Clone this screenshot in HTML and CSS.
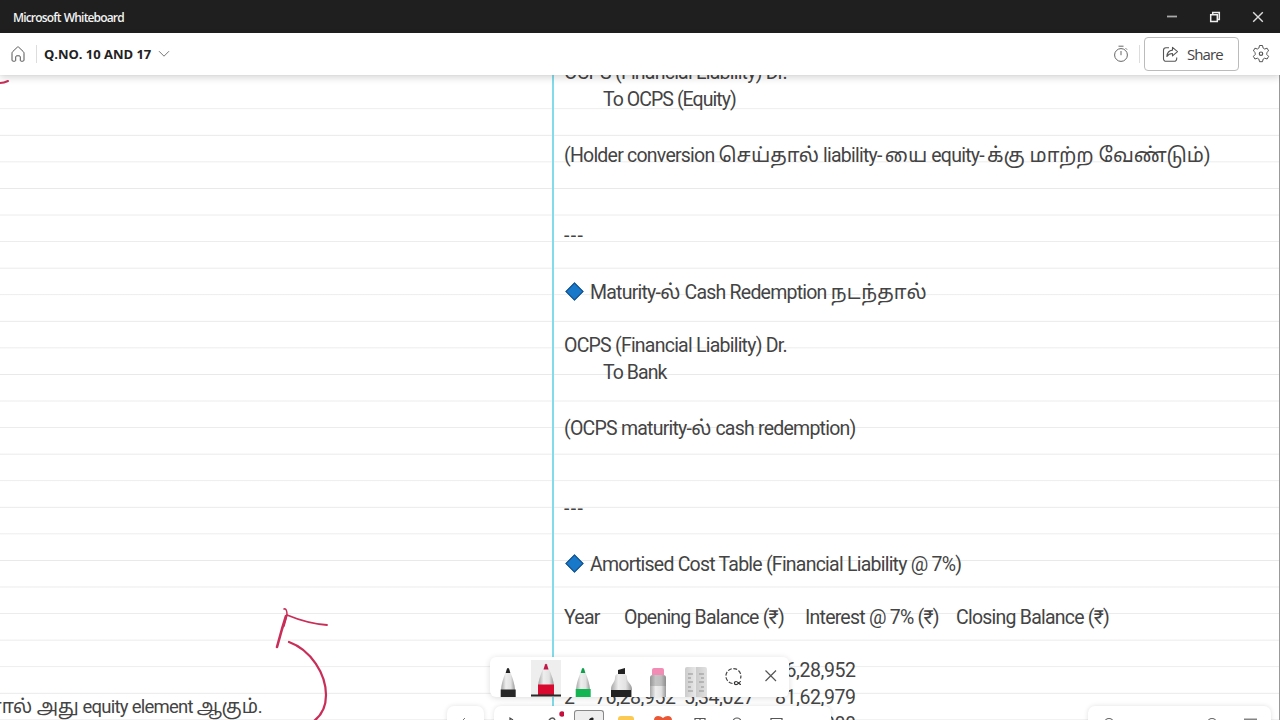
FILE: index.html
```
<!DOCTYPE html>
<html lang="en">
<head>
  <meta charset="UTF-8" />
  <meta name="viewport" content="width=device-width, initial-scale=1.0"/>
  <title>Microsoft Whiteboard</title>
  <link rel="stylesheet" href="styles.css">
</head>
<body>
  <div class="titlebar">
    <span class="app-name">Microsoft Whiteboard</span>
    <div class="window-buttons">
      <svg width="12" height="12" viewBox="0 0 12 12"><path d="M1 5.5h10" stroke="#aaa" stroke-width="1.8"/></svg>
      <svg width="12" height="12" viewBox="0 0 12 12"><path d="M1.7 3.7h6.6v6.8H1.7zM3.7 3.5V1.4h6.6v7.2H8.5" stroke="#eee" stroke-width="1.5"/></svg>
      <svg width="12" height="12" viewBox="0 0 12 12"><path d="M1.2 1.2l9.6 9.6M10.8 1.2L1.2 10.8" stroke="#ddd" stroke-width="1.4"/></svg>
    </div>
  </div>

  <header class="header">
    <svg class="home" width="16" height="18" viewBox="0 0 16 18"><path d="M2 8.2c0-.7.3-1.2.8-1.7l4.4-4.2c.5-.5 1.1-.5 1.6 0l4.4 4.2c.5.5.8 1 .8 1.7v6.9c0 .7-.4 1.1-1.1 1.1h-1.8c-.5 0-.8-.3-.8-.8V12c0-.7-.4-1.2-1.1-1.2H6.800c-.7 0-1.1.5-1.1 1.2v3.4c0 .5-.3.8-.8.8H3.100c-.7 0-1.1-.4-1.1-1.1z" stroke="#555"/></svg>
    <span class="divider"></span>
    <span class="board-name">Q.NO. 10 AND 17</span>
    <svg class="chevron" width="12" height="8" viewBox="0 0 12 8"><path d="M1 1.2l5 5 5-5" stroke="#777"/></svg>

    <div class="header-right">
      <svg width="16" height="18" viewBox="0 0 16 18"><circle cx="8" cy="10" r="6.4" stroke="#666"/><path d="M5.5 1.2h5M8 6v4.2M12.6 3.2l1.4 1.4" stroke="#666"/></svg>
      <span class="divider"></span>
      <button class="share">
        <svg width="17" height="17" viewBox="0 0 17 17"><path d="M7 1.7H4A2.5 2.5 0 0 0 1.5 4.2v8.6A2.5 2.5 0 0 0 4 15.3h8.2a2.5 2.5 0 0 0 2.5-2.5v-1.3" stroke="#555" stroke-width="1.1"/><path d="M10.5 1.3l5 4.3-5 4.3V7.5c-2.6 0-4.3.9-5.6 3 .2-3.6 2-6 5.6-6.400z" stroke="#555" stroke-width="1.1" stroke-linejoin="round"/></svg>
        <span>Share</span>
      </button>
      <svg class="gear" width="18" height="20" viewBox="0 0 18 20"><path d="M7.5 1.5h3l.6 2.6q.8.3 1.5.9l2.5-.8 1.5 2.7-1.9 1.8q.2.8 0 1.7l1.9 1.9-1.5 2.7-2.5-.8q-.7.6-1.5.9l-.6 2.6h-3l-.6-2.600q-.8-.3-1.5-.9l-2.500.8-1.500-2.700 1.900-1.900q-.2-.9 0-1.700L1.400 6.900l1.500-2.700 2.500.8q.7-.6 1.500-.9z" stroke="#555" stroke-linejoin="round"/><circle cx="9" cy="9.700" r="1.700" stroke="#555" stroke-width="1.200"/></svg>
    </div>
  </header>

  <main class="board">
    <span class="margin-line"></span>

    <div class="notes">
      <p>OCPS (Financial Liability) Dr.</p>
      <p class="indent">To OCPS (Equity)</p>
      <p class="gap">(Holder conversion <span class="ta">செய்தால்</span> liability<span class="hyphen">-</span><span class="ta">யை</span> equity<span class="hyphen">-</span><span class="ta">க்கு மாற்ற வேண்டும்</span>)</p>
      <p class="gap-wide dashes">---</p>
      <p class="heading"><i class="diamond"></i>Maturity-<span class="ta">ல்</span> Cash Redemption <span class="ta wide">நடந்தால்</span></p>
      <p class="gap-small">OCPS (Financial Liability) Dr.</p>
      <p class="indent">To Bank</p>
      <p class="gap">(OCPS maturity-<span class="ta">ல்</span> cash redemption)</p>
      <p class="gap-wide dashes">---</p>
      <p class="heading"><i class="diamond"></i>Amortised Cost Table (Financial Liability @ 7%)</p>
      <p class="gap-small columns"><span class="year">Year</span><span class="opening">Opening Balance (₹)</span><span class="interest">Interest @ 7% (₹)</span><span>Closing Balance (₹)</span></p>
      <p class="gap-small row"><span class="no">1</span><span class="open">71,20,516</span><span class="int">4,98,436</span><span>76,28,952</span></p>
      <p class="row"><span class="no">2</span><span class="open">76,28,952</span><span class="int">5,34,027</span><span>81,62,979</span></p>
      <p class="row"><span class="no">3</span><span class="open">81,62,979</span><span class="int">5,71,409</span><span>87,34,388</span></p>
    </div>

    <p class="left-note"><span class="ta">ஆனால் அது</span> equity element <span class="ta">ஆகும்</span>.</p>

    <svg class="ink" width="340" height="645" viewBox="0 75 340 645">
      <path d="M0 83q4 0 8-2" stroke-width="2"/>
      <path d="M284 609q3-1 3 6l-3 11" stroke-width="1.5"/>
      <path d="M286 616l-4 13-5 18" stroke-width="2.6"/>
      <path d="M287 615c12 5 26 9 40 10" stroke-width="1.8"/>
      <path d="M289 642c22 8 37 32 37 53 0 11-4 20-12 26" stroke-width="2.2"/>
    </svg>

    <div class="pens">
      <svg class="tool" width="30" height="37" viewBox="0 0 30 37"><path d="M8 37v-6c0-7 3-15 6-22h2c3 7 6 15 6 22v6z" fill="url(#body)"/><path d="M12.7 13L14 8.5q1-1 2 0l1.3 4.5z" fill="#222"/><path d="M7.7 29.5h15V37h-15z" fill="#272727"/></svg>
      <svg class="tool active" width="30" height="37" viewBox="0 0 30 37"><path d="M7 36v-9C7 20 11 11 14 5h2c3 6 7 15 7 22v9z" fill="url(#body)"/><path d="M12.5 9.5L14 4.5q1-1.5 2 0l1.5 5z" fill="#c21847"/><path d="M7 24.5h16V35H7z" fill="#d8082f"/><path d="M0 35.500h30" stroke="#292929" stroke-width="2"/></svg>
      <svg class="tool" width="30" height="37" viewBox="0 0 30 37"><path d="M8 37v-6c0-7 3-15 6-22h2c3 7 6 15 6 22v6z" fill="url(#body)"/><path d="M12.7 13L14 8.5q1-1 2 0l1.3 4.5z" fill="#0ea04b"/><path d="M7.7 29h15v8h-15z" fill="#12b552"/></svg>
      <svg class="tool" width="30" height="37" viewBox="0 0 30 37"><path d="M5 37v-8c0-5 4-7 4-11q0-4 3-4h6q3 0 3 4c0 4 5 6 5 11v8z" fill="url(#body)"/><path d="M12 14v-4l7-2v6z" fill="#222"/><path d="M5 30h20v7H5z" fill="#222"/></svg>
      <svg class="tool" width="30" height="37" viewBox="0 0 30 37"><path d="M7 37V18q0-3 3-3h10q3 0 3 3v19z" fill="url(#body)"/><path d="M7 26v-8q0-3 3-3h10q3 0 3 3v8z" fill="#777" opacity=".35"/><path d="M9 15v-5q0-2 2-2h8q2 0 2 2v5z" fill="#f38cb5"/></svg>
      <svg class="tool" width="30" height="37" viewBox="0 0 30 37"><path d="M4 37V9q0-2 2-2h18q2 0 2 2v28z" fill="url(#ruler)"/><path d="M7 14h5M7 18h3M7 22h5M7 27h3M7 31h5M23 14h-5M23 18h-3M23 22h-5M23 27h-3M23 31h-5" stroke="#777" stroke-width=".7"/></svg>
      <svg class="tool" width="30" height="37" viewBox="0 0 30 37"><path d="M14.5 23.5a7.5 7.5 0 1 1 8-5" stroke="#444" stroke-width="1.2" stroke-dasharray="4 1.6"/><path d="M23 24.5c-2 0-3-3-5-3a1.6 1.6 0 0 0 0 3.2c2.500 0 3-3.200 5-3.200" stroke="#333" stroke-width="1.2"/></svg>
      <svg class="tool" width="30" height="37" viewBox="0 0 30 37"><path d="M9.5 10.5L20 21M20 10.5L9.500 21" stroke="#555" stroke-width="1.2"/></svg>
    </div>

    <div class="undo-card"><svg width="36" height="14" viewBox="0 0 36 14"><path d="M18 12l-3 3" stroke="#777"/></svg></div>

    <div class="toolbar">
      <svg class="item" width="30" height="14" viewBox="0 0 30 14"><path d="M14 14v-2l3 2" stroke="#444" stroke-width="1.2"/></svg>
      <svg class="item" width="30" height="14" viewBox="0 0 30 14"><path d="M15 14q4-4 6 0" stroke="#555" stroke-width="1.5"/><circle cx="28" cy="8" r="2.700" fill="#c50f3c"/></svg>
      <svg class="item selected" width="30" height="14" viewBox="0 0 30 14"><path d="M14 11l2-3q3-2 4 0l-1 6z" fill="#222"/></svg>
      <svg class="item" width="30" height="14" viewBox="0 0 30 14"><path d="M9 14v-1q0-3 3-3h10q3 0 3 3v1z" fill="#fbca55"/></svg>
      <svg class="item" width="30" height="14" viewBox="0 0 30 14"><path d="M8 14c0-5 6-5 9-2 3-3 9-3 9 2z" fill="#e95836"/></svg>
      <svg class="item" width="30" height="14" viewBox="0 0 30 14"><path d="M11 14v-1.500h10V14M16 12.500V14" stroke="#555" stroke-width="1.2"/></svg>
      <svg class="item" width="30" height="14" viewBox="0 0 30 14"><circle cx="16" cy="16" r="4" stroke="#555" stroke-width="1.2"/></svg>
      <svg class="item" width="30" height="14" viewBox="0 0 30 14"><path d="M12 14v-1.500h11V14" stroke="#555" stroke-width="1.2"/></svg>
    </div>

    <div class="zoom-card">
      <svg width="150" height="14" viewBox="0 0 150 14"><circle cx="21" cy="17" r="4.5" stroke="#666" stroke-width="1.2"/><circle cx="124" cy="17" r="4.5" stroke="#666" stroke-width="1.2"/></svg>
      <svg width="24" height="14" viewBox="0 0 24 14"><path d="M6 13.2h13" stroke="#666" stroke-width="1.2"/></svg>
    </div>
  </main>

  <svg width="0" height="0" class="defs">
    <linearGradient id="body"><stop offset="0" stop-color="#a5a5a5"/><stop offset=".35" stop-color="#eee"/><stop offset=".7" stop-color="#e2e2e2"/><stop offset="1" stop-color="#999"/></linearGradient>
    <linearGradient id="ruler"><stop offset="0" stop-color="#ccc"/><stop offset=".48" stop-color="#e8e8e8"/><stop offset=".52" stop-color="#ccc"/><stop offset="1" stop-color="#e1e1e1"/></linearGradient>
  </svg>
</body>
</html>
```
FILE: styles.css
```
* {
  margin: 0;
  padding: 0;
  box-sizing: border-box;
}

body {
  width: 1280px;
  height: 720px;
  overflow: hidden;
  display: flex;
  flex-direction: column;
  background: #fff;
  font-family: "Open Sans", sans-serif;
}

svg {
  fill: none;
  display: block;
  flex-shrink: 0;
}

.defs {
  position: absolute;
}

.titlebar {
  height: 33px;
  flex-shrink: 0;
  background: #1f1f1f;
  color: #f2f2f2;
  display: flex;
  align-items: center;
  justify-content: space-between;
  padding: 0 16px 0 13px;
}

.app-name {
  font-size: 12px;
  font-weight: 600;
  letter-spacing: -0.84px;
  word-spacing: 1px;
  padding-top: 2px;
}

.window-buttons {
  display: flex;
  gap: 31px;
}

.header {
  height: 42px;
  flex-shrink: 0;
  display: flex;
  align-items: center;
  padding: 0 10px;
  background: #fff;
  position: relative;
  z-index: 2;
  box-shadow: 0 3px 7px rgba(0, 0, 0, 0.15);
}

.divider {
  width: 1px;
  height: 18px;
  background: #ddd;
}

.home + .divider {
  margin-left: 10px;
}

.board-name {
  margin-left: 7px;
  font-size: 13px;
  font-weight: 700;
  color: #222;
  letter-spacing: -0.03px;
}

.chevron {
  margin-left: 7px;
}

.header-right {
  margin-left: auto;
  display: flex;
  align-items: center;
}

.header-right .divider {
  margin: 0 4px 0 10px;
}

.share {
  width: 95px;
  height: 34px;
  border: 1px solid #bbb;
  border-radius: 4px;
  background: #fff;
  display: flex;
  align-items: center;
  gap: 8px;
  padding-left: 17px;
  font: 15px "Open Sans", sans-serif;
  letter-spacing: -0.9px;
  color: #444;
}

.gear {
  margin-left: 13px;
}

.board {
  flex: 1;
  position: relative;
  overflow: hidden;
  border-right: 1px solid #999;
  background: repeating-linear-gradient(#fff 0, #fff 24.8px, #e9e9e9 25.8px, #fff 26.57px);
  background-position: 0 8px;
}

.margin-line {
  position: absolute;
  left: 552px;
  top: 0;
  bottom: 0;
  width: 2px;
  background: #83dcea;
}

.notes {
  padding-left: 564px;
  margin-top: -16px;
  font-family: Roboto, "Noto Sans Tamil", "Noto Sans", sans-serif;
  font-size: 19.5px;
  letter-spacing: -0.77px;
  color: #444;
}

.notes p {
  height: 27px;
  line-height: 27px;
  white-space: pre;
}

.notes .indent {
  padding-left: 39px;
  letter-spacing: -0.95px;
}

.notes .gap {
  margin-top: 29px;
}

.notes .gap-wide {
  margin-top: 53px;
}

.notes .gap-small {
  margin-top: 26px;
}

.notes .dashes {
  letter-spacing: 1.3px;
}

.notes .ta {
  font-size: 20px;
  letter-spacing: -0.05px;
}

.notes .wide {
  letter-spacing: 0.4px;
}

.notes .hyphen {
  letter-spacing: 2.4px;
}

.notes .heading {
  display: flex;
  margin-top: 29.5px;
}

.diamond {
  width: 13px;
  height: 13px;
  margin: 6px 9px 0 4px;
  background: #1878c9;
  border: 1px solid #185088;
  transform: rotate(45deg);
  flex-shrink: 0;
}

.columns,
.row {
  display: flex;
}

.notes .row {
  letter-spacing: -0.42px;
}

.year {
  width: 60px;
}

.opening {
  width: 181px;
}

.interest {
  width: 151px;
}

.no {
  width: 31px;
}

.open {
  width: 89px;
}

.int {
  width: 91px;
}

.left-note {
  position: absolute;
  right: 1017px;
  top: 618px;
  line-height: 27px;
  white-space: nowrap;
  font-family: Roboto, "Noto Sans Tamil", "Noto Sans", sans-serif;
  font-size: 18.5px;
  letter-spacing: -0.75px;
  color: #444;
}

.left-note .ta {
  font-size: 19px;
  letter-spacing: -0.1px;
}

.ink {
  position: absolute;
  left: 0;
  top: 0;
  stroke: #c92e58;
  stroke-linecap: round;
  stroke-linejoin: round;
}

.pens {
  position: absolute;
  left: 490px;
  top: 582px;
  width: 299px;
  height: 40px;
  padding: 3px 3px 0;
  display: flex;
  gap: 7.5px;
  background: #fff;
  border-radius: 6px;
  box-shadow: 0 1px 6px rgba(0, 0, 0, 0.14);
}

.tool.active {
  background: #eee;
}

.undo-card,
.toolbar,
.zoom-card {
  position: absolute;
  top: 631px;
  height: 40px;
  background: #fff;
  border-radius: 7px;
  box-shadow: 0 0 5px rgba(0, 0, 0, 0.12);
}

.undo-card {
  left: 447px;
  width: 37px;
}

.toolbar {
  left: 494px;
  width: 337px;
  display: flex;
  gap: 7.5px;
  padding-left: 2px;
}

.item.selected {
  position: relative;
  left: 3px;
  margin-top: 4px;
  background: #eee;
  border: 1px solid #888;
  border-bottom: none;
  border-radius: 3px 3px 0 0;
}

.zoom-card {
  left: 1088px;
  width: 183px;
  display: flex;
}
```
